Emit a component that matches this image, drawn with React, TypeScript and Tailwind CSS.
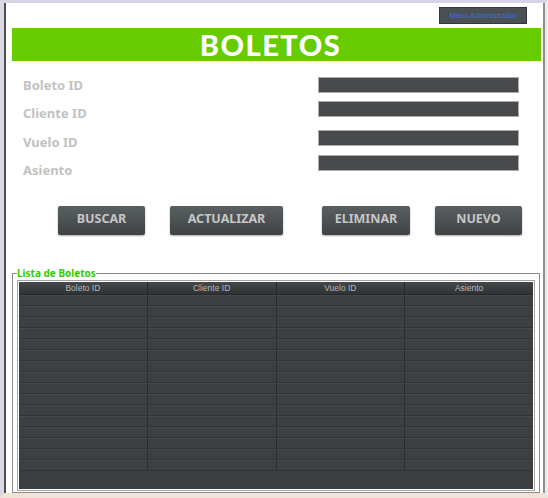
import React from 'react';

const campos = ['Boleto ID', 'Cliente ID', 'Vuelo ID', 'Asiento'];
const columnas = ['Boleto ID', 'Cliente ID', 'Vuelo ID', 'Asiento'];
const filas = Array.from({ length: 16 }, (_, i) => i);

const Boton: React.FC<{ label: string; className?: string }> = ({ label, className }) => (
  <button
    className={`h-[29px] rounded-[2px] bg-gradient-to-b from-[#5a5f62] to-[#3f4346] pb-[3px] text-[12.5px] font-bold text-[#c6c6c6] shadow-[0_1px_2px_rgba(0,0,0,0.35)] font-['Noto_Sans',sans-serif] ${className ?? ''}`}
  >
    {label}
  </button>
);

const App: React.FC = () => {
  return (
    <div className="flex h-[498px] w-[548px] border-t-[3px] border-b-[5px] border-l-4 border-r-[3px] border-t-[#d6d4e4] border-b-[#f2e3d9] border-l-[#dad8e2] border-r-[#ececec] bg-white">
      <div className="flex flex-1 flex-col border-l-2 border-r-2 border-l-[#4e4e4e] border-r-[#8e8e8e] bg-white">
        <div className="mt-[4px] flex justify-end pr-[16px]">
          <button className="h-[17px] w-[88px] border border-[#33373a] bg-[#4b5054] text-[7.5px] text-[#3d6fd6] font-['Liberation_Sans',sans-serif]">
            Menú Administrador
          </button>
        </div>

        <div className="ml-[6px] mr-[2px] mt-[4px] flex h-[34px] items-center justify-center bg-[#66cc00] pr-[12px]">
          <span className="text-[29px] font-black leading-none tracking-[1.5px] text-white font-['Lato',sans-serif]">
            BOLETOS
          </span>
        </div>

        <div className="mt-[9px] flex pl-[17px]">
          <div className="flex w-[295px] flex-col pt-[1px]">
            {campos.map((c) => (
              <div
                key={c}
                className="flex h-[28.5px] items-center text-[13px] font-bold text-[#c2c2c2] font-['Noto_Sans',sans-serif]"
              >
                {c}
              </div>
            ))}
          </div>
          <div className="flex flex-col pt-[7px]">
            <div className="h-[16px] w-[201px] border border-[#a9abac] bg-[#47494b]" />
            <div className="mt-[8px] h-[16px] w-[201px] border border-[#a9abac] bg-[#47494b]" />
            <div className="mt-[13px] h-[16px] w-[201px] border border-[#a9abac] bg-[#47494b]" />
            <div className="mt-[9px] h-[16px] w-[201px] border border-[#a9abac] bg-[#47494b]" />
          </div>
        </div>

        <div className="mt-[21px] flex pl-[52px]">
          <Boton label="BUSCAR" className="w-[87px]" />
          <Boton label="ACTUALIZAR" className="ml-[25px] w-[113px]" />
          <Boton label="ELIMINAR" className="ml-[39px] w-[88px]" />
          <Boton label="NUEVO" className="ml-[25px] w-[87px]" />
        </div>

        <fieldset className="ml-[6px] mr-[3px] mt-[32px] border border-[#8c8c8c] px-[4px] pb-[1px]">
          <legend className="text-[10px] font-bold leading-[12px] text-[#33cc00] font-['Noto_Sans',sans-serif]">
            Lista de Boletos
          </legend>
          <div className="mt-[1px] border border-[#a4a4a4] p-[1px]">
            <div className="flex h-[207px] flex-col bg-[#3b3e40] font-['Liberation_Sans',sans-serif]">
              <div className="flex h-[13px] border-b border-[#26282a] bg-gradient-to-b from-[#45484b] to-[#303335]">
                {columnas.map((c, i) => (
                  <div
                    key={c}
                    className={`flex flex-1 items-center justify-center text-[8.5px] leading-none text-[#b6b6b6] ${
                      i < 3 ? 'border-r border-[#26282a]' : ''
                    }`}
                  >
                    {c}
                  </div>
                ))}
              </div>
              {filas.map((f) => (
                <div key={f} className="flex h-[11px] border-b border-[#303234] bg-[#3d4042]">
                  {columnas.map((c, i) => (
                    <div
                      key={c}
                      className={`flex-1 border-t border-[#46494b] ${i < 3 ? 'border-r border-r-[#2a2c2e]' : ''}`}
                    />
                  ))}
                </div>
              ))}
            </div>
          </div>
        </fieldset>
      </div>
    </div>
  );
};

export default App;
